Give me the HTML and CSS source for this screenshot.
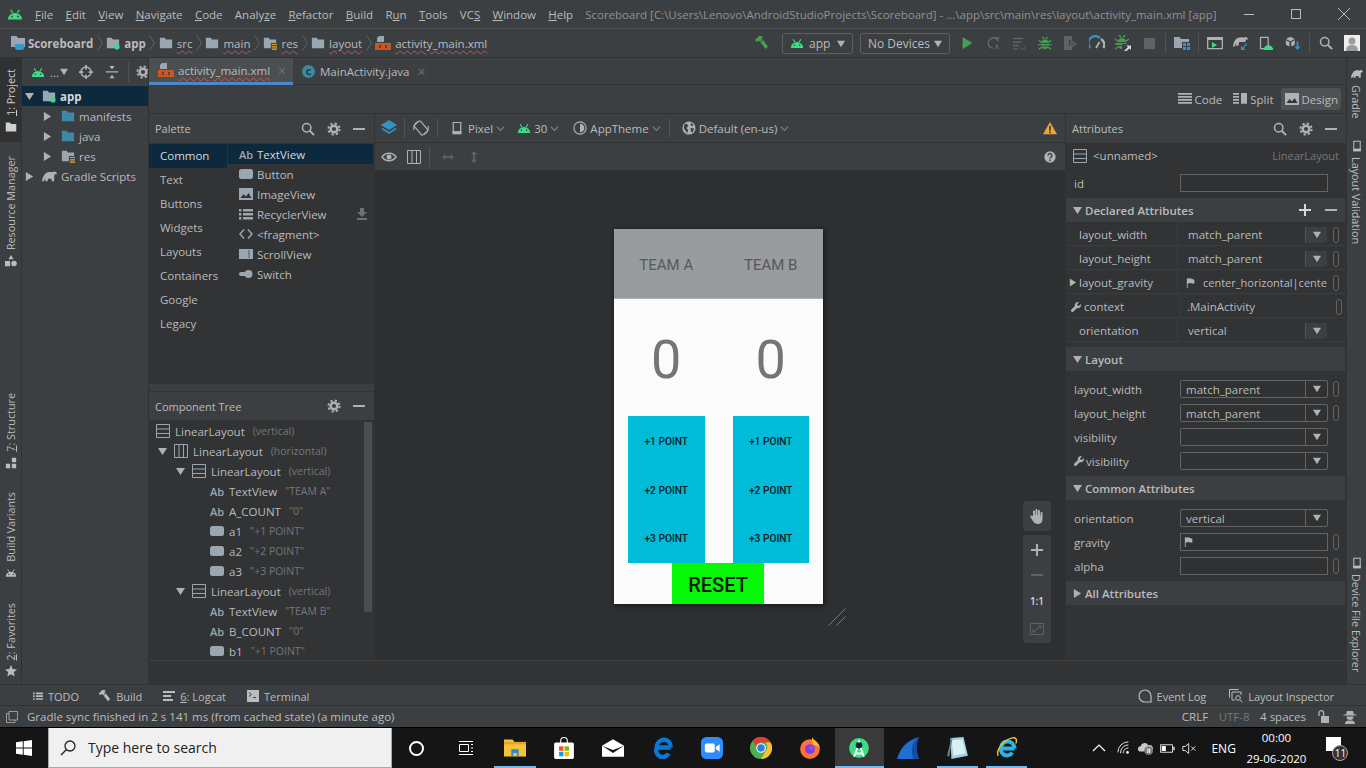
FILE: index.html
```html
<!DOCTYPE html>
<html lang="en">
<head>
  <meta charset="UTF-8" />
  <title>Scoreboard - activity_main.xml</title>
  <link rel="stylesheet" href="styles.css">
</head>
<body>
  <!-- icon sprite -->
  <svg class="sprite" xmlns="http://www.w3.org/2000/svg">
    <symbol id="i-android" viewBox="0 0 16 12"><path fill="currentColor" d="M1 11a7 6.6 0 0 1 14 0z"/><path stroke="currentColor" stroke-width="1.2" d="M3.6 1.2l2 3.2M12.4 1.2l-2 3.2"/><circle cx="5" cy="8" r=".9" fill="#3c3f41"/><circle cx="11" cy="8" r=".9" fill="#3c3f41"/></symbol>
    <symbol id="i-folder" viewBox="0 0 16 16"><path fill="currentColor" d="M1 2h5.5L8 4h7v10H1z"/></symbol>
    <symbol id="i-module" viewBox="0 0 16 16"><path fill="#9aa7b0" d="M1 2h5.5L8 4h7v10H1z"/><circle cx="12.5" cy="12.5" r="3" fill="#3ddc84"/></symbol>
    <symbol id="i-res" viewBox="0 0 16 16"><path fill="#9aa7b0" d="M1 2h5.5L8 4h7v10H1z"/><path fill="#3c3f41" d="M9 8h7v8H9z"/><path fill="#e5a93a" d="M10 9h6v1.4h-6zM10 11.6h6V13h-6zM10 14.2h6v1.4h-6z"/></symbol>
    <symbol id="i-project" viewBox="0 0 16 16"><path fill="#9aa7b0" d="M1 1h5.5L8 3h7v9H1z"/><path fill="#2d9bd6" d="M5 9h9v3.5a2.5 2.5 0 0 1-2.5 2.5h-4A2.5 2.5 0 0 1 5 12.5z"/></symbol>
    <symbol id="i-xml" viewBox="0 0 16 16"><path fill="#9aa7b0" d="M4 1h5v6H2V3z"/><path fill="#c7581f" d="M0 8h16v7H0z"/><path fill="none" stroke="#2b2d30" d="M6 10l-2 1.5L6 13M10 10l2 1.5L10 13"/></symbol>
    <symbol id="i-tri-r" viewBox="0 0 10 10"><path fill="currentColor" d="M1 0l8 5-8 5z"/></symbol>
    <symbol id="i-tri-d" viewBox="0 0 10 10"><path fill="currentColor" d="M0 1h10L5 9z"/></symbol>
    <symbol id="i-chev-d" viewBox="0 0 10 10"><path fill="none" stroke="currentColor" stroke-width="1.3" d="M1 3l4 4 4-4"/></symbol>
    <symbol id="i-chev-r" viewBox="0 0 6 16"><path fill="none" stroke="currentColor" d="M.5.5l5 7.5-5 7.5"/></symbol>
    <symbol id="i-gear" viewBox="0 0 16 16"><circle cx="8" cy="8" r="3.8" fill="none" stroke="currentColor" stroke-width="2.8"/><circle cx="8" cy="8" r="6.4" fill="none" stroke="currentColor" stroke-width="2.2" stroke-dasharray="2.6 2.43"/></symbol>
    <symbol id="i-search" viewBox="0 0 16 16"><circle cx="6.5" cy="6.5" r="4.8" fill="none" stroke="currentColor" stroke-width="1.7"/><path stroke="currentColor" stroke-width="2.2" d="M10 10l5 5"/></symbol>
    <symbol id="i-minus" viewBox="0 0 12 12"><path fill="currentColor" d="M0 5h12v2H0z"/></symbol>
    <symbol id="i-plus" viewBox="0 0 12 12"><path fill="currentColor" d="M0 5h12v2H0zM5 0h2v12H5z"/></symbol>
    <symbol id="i-target" viewBox="0 0 16 16"><circle cx="8" cy="8" r="5.8" fill="none" stroke="currentColor" stroke-width="1.6"/><path stroke="currentColor" stroke-width="2" d="M8 0v5M8 11v5M0 8h5M11 8h5"/></symbol>
    <symbol id="i-collapse" viewBox="0 0 16 16"><path fill="currentColor" d="M1 7h14v1.6H1zM5 1h6L8 5zM5 15h6l-3-4z"/></symbol>
    <symbol id="i-lin-v" viewBox="0 0 14 14"><path fill="none" stroke="currentColor" d="M.5.5h13v13H.5zM.5 5h13M.5 9.5h13"/></symbol>
    <symbol id="i-lin-h" viewBox="0 0 14 14"><path fill="none" stroke="currentColor" d="M.5.5h13v13H.5zM5 .5v13M9.5 .5v13"/></symbol>
    <symbol id="i-button" viewBox="0 0 14 14"><rect y="2" width="14" height="10" rx="2.5" fill="currentColor"/></symbol>
    <symbol id="i-image" viewBox="0 0 14 14"><path fill="currentColor" d="M0 1h14v12H0z"/><path fill="#313335" d="M1.5 11l3-4 2.5 2.5L9.500 6l3 5z"/></symbol>
    <symbol id="i-list" viewBox="0 0 14 14"><path fill="currentColor" d="M0 2h2.400v2.400H0zM4 2h10v2.400H4zM0 6h2.400v2.400H0zM4 6h10v2.400H4zM0 10h2.400v2.400H0zM4 10h10v2.400H4z"/></symbol>
    <symbol id="i-code" viewBox="0 0 14 14"><path fill="none" stroke="currentColor" stroke-width="1.500" d="M5 2.500L1 7l4 4.500M9 2.500L13 7l-4 4.500"/></symbol>
    <symbol id="i-scroll" viewBox="0 0 14 14"><path fill="currentColor" d="M0 2h14v10H0z"/><path fill="#313335" d="M9.500 3h1v8h-1z" opacity=".6"/></symbol>
    <symbol id="i-switch" viewBox="0 0 14 14"><rect y="5" width="7" height="4" rx="2" fill="currentColor"/><circle cx="9.500" cy="7" r="4" fill="currentColor"/></symbol>
    <symbol id="i-download" viewBox="0 0 12 12"><path fill="currentColor" d="M4 0h4v4h3L6 9 1 4h3zM1 10h10v2H1z"/></symbol>
    <symbol id="i-flag" viewBox="0 0 12 12"><path fill="currentColor" d="M1 0h1v12H1zM2 1l3-.6L10 2v5L5 6 2 7z"/></symbol>
    <symbol id="i-wrench" viewBox="0 0 12 12"><path fill="currentColor" d="M11.500 2.500L9 5 7 3 9.500.5a3.500 3.500 0 0 0-4.800 4.300L.5 9a1.700 1.700 0 0 0 2.500 2.500l4.200-4.200a3.500 3.500 0 0 0 4.300-4.800z"/></symbol>
    <symbol id="i-hammer" viewBox="0 0 16 16"><path fill="currentColor" d="M2 5L6 1h3l1 1.500-2 .5 1.500 1.500L7 7 5.500 5.500 4 7zM7.500 7.500L10 5l5 6.500-2.500 2.500z"/></symbol>
    <symbol id="i-elephant" viewBox="0 0 16 12"><path fill="currentColor" d="M3 3.500C4.500 1 9 .8 11 1.500l2-.8c1.400 0 2.400.8 2.800 2L15 4.200c-.7-.3-1-.8-1.500-.8L13 6v5h-2.500l-.5-2.500H6.500L6 11H3.500V7.500L2 11H0c.2-3 1.200-5.500 3-7.500z"/></symbol>
    <symbol id="i-bug" viewBox="0 0 16 16"><ellipse cx="8" cy="9.500" rx="5" ry="5.500" fill="currentColor"/><path stroke="currentColor" stroke-width="1.400" d="M1 5l3 2M15 5l-3 2M0 10h3M13 10h3M1 15l3-2M15 15l-3-2M5 1l2 2.500M11 1L9 3.500"/><path stroke="#3c3f41" d="M3 8.500h10M3 11.500h10"/></symbol>
    <symbol id="i-layers" viewBox="0 0 16 16"><path fill="#3592c4" d="M8 0l8 5-8 5-8-5z"/><path fill="none" stroke="#3592c4" stroke-width="1.500" d="M1 8.500l7 4.500 7-4.500"/></symbol>
    <symbol id="i-rotate" viewBox="0 0 16 16"><g fill="none" stroke="currentColor" stroke-width="1.200"><rect x="4" y="1.500" width="8" height="13" rx="1" transform="rotate(-40 8 8)"/><path d="M1 10A7.500 7.500 0 0 1 5 1.500M15 6a7.500 7.500 0 0 1-4 8.500"/></g></symbol>
    <symbol id="i-device" viewBox="0 0 12 16"><path fill="none" stroke="currentColor" stroke-width="1.400" d="M1.700 1.700h8.600v12.600H1.700z"/><path fill="currentColor" d="M1 11.500h10v3.500H1z"/></symbol>
    <symbol id="i-theme" viewBox="0 0 16 16"><circle cx="8" cy="8" r="7" fill="none" stroke="currentColor" stroke-width="1.300"/><path fill="currentColor" d="M8 3a5 5 0 0 1 0 10z"/></symbol>
    <symbol id="i-globe" viewBox="0 0 16 16"><circle cx="8" cy="8" r="7.500" fill="currentColor"/><path fill="#3c3f41" d="M3 3l3 .5L7 6 5 8l2 2-1 4-2-3-2-3zM10 2l3 2-1 2-2-1zM10 8l4 .5-2 4.500-2-1z"/></symbol>
    <symbol id="i-warn" viewBox="0 0 16 16"><path fill="#f2a42c" d="M8 1l8 14H0z"/><path fill="#3c3f41" d="M7 5.500h2V11H7zM7 12h2v2H7z"/></symbol>
    <symbol id="i-help" viewBox="0 0 16 16"><circle cx="8" cy="8" r="6.500" fill="#afb1b3"/><path fill="none" stroke="#3c3f41" stroke-width="1.600" d="M5.800 6.300a2.200 2.200 0 1 1 3.400 1.800c-.8.500-1.200.9-1.200 1.700"/><path fill="#3c3f41" d="M7.100 10.800h1.800v1.700H7.100z"/></symbol>
    <symbol id="i-eye" viewBox="0 0 16 16"><path fill="none" stroke="currentColor" stroke-width="1.400" d="M1 8c3.500-5 10.500-5 14 0-3.500 5-10.500 5-14 0z"/><circle cx="8" cy="8" r="2.500" fill="currentColor"/></symbol>
    <symbol id="i-arrow-h" viewBox="0 0 16 16"><path fill="currentColor" d="M1 8l4-3.500v2.500h6V4.500L15 8l-4 3.500V9H5v2.500z"/></symbol>
    <symbol id="i-arrow-v" viewBox="0 0 16 16"><path fill="currentColor" d="M8 1l3.500 4H9v6h2.500L8 15l-3.500-4H7V5H4.500z"/></symbol>
    <symbol id="i-code-view" viewBox="0 0 14 14"><path fill="currentColor" d="M0 1h14v1.800H0zM0 4h14v1.800H0zM0 7h14v1.800H0zM0 10h14v1.800H0z"/></symbol>
    <symbol id="i-split-view" viewBox="0 0 14 14"><path fill="currentColor" d="M0 1h6v1.800H0zM0 4h6v1.800H0zM0 7h6v1.800H0zM0 10h6v1.800H0zM8 1h6v10.800H8z"/></symbol>
    <symbol id="i-res-mgr" viewBox="0 0 14 14"><path fill="currentColor" d="M7 0l3 5H4zM0 7h6v6H0z"/><circle cx="10.500" cy="10" r="3.200" fill="currentColor"/></symbol>
    <symbol id="i-structure" viewBox="0 0 14 14"><path fill="currentColor" d="M8 1h5v5H8zM1 8h5v5H1zM8 8h5v5H8z"/></symbol>
    <symbol id="i-star" viewBox="0 0 14 14"><path fill="currentColor" d="M7 0l2 4.800 5 .4-3.800 3.300 1.200 5L7 10.900l-4.400 2.600 1.200-5L0 5.200l5-.4z"/></symbol>
    <symbol id="i-term" viewBox="0 0 12 12"><path fill="currentColor" d="M0 0h12v12H0z"/><path fill="none" stroke="#3c3f41" d="M2 2.500l2.500 2L2 6.500M6 7.500h3"/></symbol>
    <symbol id="i-logcat" viewBox="0 0 12 12"><path fill="currentColor" d="M0 1h12v2H0zM0 5h8v2H0zM0 9h10v2H0z"/></symbol>
    <symbol id="i-event" viewBox="0 0 14 14"><path fill="none" stroke="currentColor" stroke-width="1.200" d="M7 1a6 6 0 1 0 0 12h6V7a6 6 0 0 0-6-6z"/></symbol>
    <symbol id="i-inspect" viewBox="0 0 14 14"><path fill="none" stroke="currentColor" d="M.5.500h9M.5.500v8M3 3h9v3M3 3v8h3"/><circle cx="9" cy="9" r="2.300" fill="none" stroke="currentColor"/><path stroke="currentColor" d="M11 11l2.500 2.500"/></symbol>
    <symbol id="i-status" viewBox="0 0 14 14"><path fill="none" stroke="currentColor" d="M3.500.500h10v10h-10zM3.500 3H.5v10.500h10v-3"/></symbol>
    <symbol id="i-lock" viewBox="0 0 14 14"><path fill="none" stroke="currentColor" stroke-width="1.300" d="M2 6V3a2.300 2.300 0 0 1 4.600 0v3"/><path fill="currentColor" d="M4 6h8v7H4z"/></symbol>
    <symbol id="i-hector" viewBox="0 0 14 14"><path fill="currentColor" d="M4 1h6l1 3.500h2.500v1H.5v-1H3zM3.500 6.500h7a3.500 3.500 0 0 1-7 0zM2 14c0-3 2-3.500 5-3.500s5 .5 5 3.500z"/></symbol>
    <symbol id="i-win" viewBox="0 0 16 16"><path fill="#fff" d="M0 2.300l6.800-1v6.200H0zM7.700 1.200L16 0v7.500H7.700zM0 8.500h6.800v6.200l-6.800-1zM7.700 8.500H16V16l-8.300-1.200z"/></symbol>
    <symbol id="i-taskview" viewBox="0 0 16 16"><path fill="none" stroke="#fff" d="M1.500 4.500h9v7h-9zM13 4.500h2M13 8h2M13 11.500h2M1 1.500h14M1 14.500h14"/></symbol>
    <symbol id="i-explorer" viewBox="0 0 18 16"><path fill="#f5c33b" d="M0 1h7l1.500 2H18v12H0z"/><path fill="#e6a526" d="M0 3h18v2H0z"/><path fill="#2f86c9" d="M6 9h6v6h-1.500v-3h-3v3H6z"/></symbol>
    <symbol id="i-store" viewBox="0 0 18 20"><path fill="none" stroke="#fff" d="M6 6V3.500a3 3 0 0 1 6 0V6"/><rect y="5" width="18" height="15" rx="1.500" fill="#fff"/><path fill="#f25022" d="M4.500 8.500h4v4h-4z"/><path fill="#7fba00" d="M9.500 8.500h4v4h-4z"/><path fill="#00a4ef" d="M4.500 13.500h4v4h-4z"/><path fill="#ffb900" d="M9.500 13.500h4v4h-4z"/></symbol>
    <symbol id="i-mail" viewBox="0 0 20 16"><path fill="#fff" d="M0 6l10-6 10 6v10H0z"/><path fill="#1a1a1a" d="M0 6l10 6.500L20 6l-10 3.800z"/></symbol>
    <symbol id="i-edge" viewBox="0 0 20 20"><path fill="none" stroke="#0a78d7" stroke-width="4" d="M17 9.500H4.500a5.800 5.800 0 0 0 10.500 5.500M4 9.500C4.500 5 7.500 2.500 11 2.500c3.500 0 6 2.500 6 7"/></symbol>
    <symbol id="i-zoom" viewBox="0 0 20 20"><rect width="20" height="20" rx="5" fill="#2d8cff"/><rect x="3.500" y="6" width="9" height="8" rx="1.500" fill="#fff"/><path fill="#fff" d="M13.500 9l3.500-2.500v7L13.500 11z"/></symbol>
    <symbol id="i-chrome" viewBox="0 0 20 20"><circle cx="10" cy="10" r="10" fill="#4caf50"/><path fill="#e53935" d="M10 0a10 10 0 0 1 8.700 5H10a5 5 0 0 0-4.700 3.300L2.400 3.500A10 10 0 0 1 10 0z"/><path fill="#fbc02d" d="M18.700 5A10 10 0 0 1 10 20l4.300-7.500A5 5 0 0 0 14 5z"/><circle cx="10" cy="10" r="4.400" fill="#fff"/><circle cx="10" cy="10" r="3.400" fill="#2f7fe0"/></symbol>
    <symbol id="i-firefox" viewBox="0 0 20 20"><circle cx="10" cy="11" r="9" fill="#ff7139"/><path fill="#ffbd2e" d="M12 0c1 3 6 4.500 7 10-2-2-4-3-6-3-1-2-1.500-4-1-7z"/><circle cx="10" cy="11" r="4.500" fill="#7542e5"/><circle cx="11" cy="10" r="2" fill="#b045c9"/></symbol>
    <symbol id="i-studio" viewBox="0 0 20 20"><circle cx="10" cy="10" r="9" fill="#3ddc84"/><circle cx="10" cy="7.500" r="3" fill="#123"/><path fill="none" stroke="#fff" stroke-width="1.600" d="M10 3v2M8.500 10L5.500 18M11.500 10l3 8M6.500 15h7"/></symbol>
    <symbol id="i-fin" viewBox="0 0 20 20"><path fill="#1d6fd0" d="M0 20C3 10 9 3 20 0c-3 6-3 13 0 20z"/><path fill="#0f4ea3" d="M15 5c-2 5-2 10 0 15h5c-3-7-3-14 0-20z"/></symbol>
    <symbol id="i-note" viewBox="0 0 20 20"><path fill="#9fd0dc" d="M3 1l12-1 4 17-15 3z"/><path fill="#d8f0f5" d="M4 3l10-1 3 13-11 2z"/><path fill="#6a7f8a" d="M0 17l4-16 1 0-3 17z"/></symbol>
    <symbol id="i-ie" viewBox="0 0 20 20"><path fill="none" stroke="#2ab5ea" stroke-width="3.600" d="M17 10.500H4.500a5.500 5.500 0 0 0 10.200 3.500M4.500 10C5 6 7.500 4 10.500 4s6 2.500 6.500 6.500"/><path fill="none" stroke="#f3c318" stroke-width="1.300" d="M2 17C-.5 12 7 3 14 1c4-1 5.500 1 4 5"/></symbol>
    <symbol id="i-play" viewBox="0 0 16 16"><path fill="currentColor" d="M3 1l11 7-11 7z"/></symbol>
    <symbol id="i-rerun" viewBox="0 0 16 16"><path fill="none" stroke="currentColor" stroke-width="2" d="M13 4A6 6 0 1 0 8 14"/><path fill="currentColor" d="M9 1l6 0-1 6zM10 15l2-6h1l2 6h-1.500l-1-3-1 3z"/></symbol>
    <symbol id="i-apply" viewBox="0 0 16 16"><path fill="currentColor" d="M1 2h12v1.800H1zM1 6h10v1.800H1zM1 10h7v1.800H1zM1 14h6v1.500H1z"/><path fill="none" stroke="currentColor" d="M10 13a2.500 2.500 0 1 0 3-2.500"/></symbol>
    <symbol id="i-attach" viewBox="0 0 16 16"><path fill="currentColor" d="M1 1h8v14H1z"/><path fill="#3c3f41" d="M6 5h5v6H6z"/><path fill="currentColor" d="M7 4l8 5-8 5z" opacity=".7"/></symbol>
    <symbol id="i-gauge" viewBox="0 0 16 16"><path fill="none" stroke="#3592c4" stroke-width="2.400" d="M1.500 13A6.800 6.800 0 0 1 11 3"/><path fill="none" stroke="#afb1b3" stroke-width="2.400" d="M12 4a6.800 6.800 0 0 1 2.500 9"/><path stroke="#afb1b3" stroke-width="1.800" d="M7 13l3.500-6"/></symbol>
    <symbol id="i-bug-attach" viewBox="0 0 16 16"><ellipse cx="7" cy="8.500" rx="4.500" ry="5.500" fill="#499c54"/><path stroke="#499c54" stroke-width="1.400" d="M0 4l3 2M14 4l-3 2M0 9h3M0 14l3-2M4 0l2 2.500M10 0L8 2.500"/><path stroke="#3c3f41" d="M3 7.500h8M3 10.500h8"/><path fill="#3c3f41" d="M7 9h9v7H7z"/><path fill="#d5d7d9" d="M9 16l4-4-2-1.500h5V15l-1.500-1.500-3 2.500z"/></symbol>
    <symbol id="i-struct" viewBox="0 0 16 16"><path fill="#9aa7b0" d="M0 2h5.500L7 4h8v9H0z"/><path fill="#3c3f41" d="M8 7h8v9H8z"/><path fill="#3592c4" d="M9 8h3v3H9zM13 8h3v3h-3zM9 12h3v3H9zM13 12h3v3h-3z"/></symbol>
    <symbol id="i-avd" viewBox="0 0 16 16"><path fill="none" stroke="#afb1b3" stroke-width="1.300" d="M.7 2.700h14.600v11H.7z"/><path fill="#afb1b3" d="M1 3h14v2H1z"/><path fill="#3ddc84" d="M5 7l5 3-5 3z"/></symbol>
    <symbol id="i-gsync" viewBox="0 0 18 16"><path fill="#afb1b3" d="M3 4C5 1.500 10 1 12 2l2-.8c1.400 0 2.400.8 2.800 2l-.8 1.500c-.7-.3-1-.8-1.500-.8L14 7H7l-1 4H3.500V8L2 12H0c.2-3 1.200-6 3-8z"/><path fill="#3592c4" d="M15 8l-4 5-2-2v5h5l-2-2 4-5z"/></symbol>
    <symbol id="i-devmon" viewBox="0 0 18 16"><path fill="none" stroke="#afb1b3" stroke-width="1.400" d="M1.700 1.700h8.600v12.600H1.700z"/><path fill="#3ddc84" d="M5 16a5.500 5.500 0 0 1 11 0z"/></symbol>
    <symbol id="i-sdk" viewBox="0 0 18 16"><path fill="#afb1b3" d="M6 1l5 2.500L6 6 1 3.500zM1 5l4 2v5L1 10zM7 7l4-2v5l-4 2z"/><path fill="#3592c4" d="M13 6h2v6h2.500L14 16l-3.500-4H13z"/></symbol>
    <symbol id="i-user" viewBox="0 0 16 16"><path fill="#eee" d="M0 0h16v16H0z"/><circle cx="8" cy="6" r="3.500" fill="#9a9a9a"/><path fill="#9a9a9a" d="M2 16c0-5 3-6 6-6s6 1 6 6z"/></symbol>
    <symbol id="i-hand" viewBox="0 0 16 16"><path fill="currentColor" d="M4 8V3.500a1 1 0 0 1 2 0V7h.5V2a1 1 0 0 1 2 0v5H9V3a1 1 0 0 1 2 0v5h.5V5a1 1 0 0 1 2 0v6c0 3-2 5-4.500 5S5 15 3.500 12.500L1.500 9c-.7-1.300 1-2 1.800-1z"/></symbol>
    <symbol id="i-fit" viewBox="0 0 16 16"><path fill="none" stroke="currentColor" d="M1.500 2.500h13v11h-13z"/><path fill="none" stroke="currentColor" d="M4 11l8-6M9 5h3v3M4 8v3h3"/></symbol>
    <symbol id="i-wifi" viewBox="0 0 16 16"><path fill="none" stroke="#fff" d="M1 13A12 12 0 0 1 13 1M4 14a9 9 0 0 1 9-9.500M7 14a6 6 0 0 1 6-6"/><circle cx="12" cy="13" r="1.500" fill="#fff"/></symbol>
    <symbol id="i-cloud" viewBox="0 0 18 16"><path fill="#c8c8c8" d="M3 12a3 3 0 0 1 0-6 4.500 4.500 0 0 1 8.500-1 3.500 3.500 0 0 1 3 7z"/><circle cx="12" cy="11" r="5" fill="#7a7a7a"/><path fill="#fff" d="M10.500 8.500h1.200v5h-1.200zM12.500 8.500h1.200v5h-1.200z"/></symbol>
    <symbol id="i-battery" viewBox="0 0 18 12"><path fill="none" stroke="#fff" d="M.5 1.500h14.500v9H.5z"/><path fill="#fff" d="M2 3h5v6H2zM16 4h1.500v4H16z"/></symbol>
    <symbol id="i-mute" viewBox="0 0 18 16"><path fill="none" stroke="#fff" d="M1 5.500h3L8 2v12l-4-3.500H1zM11 5.500l5 5M16 5.500l-5 5"/></symbol>
    <symbol id="i-caret" viewBox="0 0 14 10"><path fill="none" stroke="#fff" stroke-width="1.200" d="M1 8l6-6 6 6"/></symbol>
  </svg>

  <!-- Menu -->
  <div class="menubar">
    <svg class="ic logo"><use href="#i-android"/></svg>
    <div class="menu">
      <span><u>F</u>ile</span><span><u>E</u>dit</span><span><u>V</u>iew</span><span><u>N</u>avigate</span><span><u>C</u>ode</span><span>Analy<u>z</u>e</span><span><u>R</u>efactor</span><span><u>B</u>uild</span><span>R<u>u</u>n</span><span><u>T</u>ools</span><span>VC<u>S</u></span><span><u>W</u>indow</span><span><u>H</u>elp</span>
    </div>
    <div class="win-title">Scoreboard [C:\Users\Lenovo\AndroidStudioProjects\Scoreboard] - ...\app\src\main\res\layout\activity_main.xml [app]</div>
    <div class="win-controls">
      <i class="win-min"></i>
      <i class="win-max"></i>
      <i class="win-close"></i>
    </div>
  </div>

  <!-- Breadcrumbs + run toolbar -->
  <div class="navbar">
    <div class="crumbs">
      <svg class="ic s16"><use href="#i-project"/></svg><b>Scoreboard</b><svg class="crumb-sep"><use href="#i-chev-r"/></svg>
      <svg class="ic s14"><use href="#i-module"/></svg><b>app</b><svg class="crumb-sep"><use href="#i-chev-r"/></svg>
      <svg class="ic s14 grey-blue"><use href="#i-folder"/></svg><span class="typo">src</span><svg class="crumb-sep"><use href="#i-chev-r"/></svg>
      <svg class="ic s14 grey-blue"><use href="#i-folder"/></svg><span class="typo">main</span><svg class="crumb-sep"><use href="#i-chev-r"/></svg>
      <svg class="ic s14"><use href="#i-res"/></svg><span class="typo">res</span><svg class="crumb-sep"><use href="#i-chev-r"/></svg>
      <svg class="ic s14 grey-blue"><use href="#i-folder"/></svg><span class="typo">layout</span><svg class="crumb-sep"><use href="#i-chev-r"/></svg>
      <svg class="ic s16"><use href="#i-xml"/></svg><span class="typo">activity_main.xml</span>
    </div>
    <div class="run-tools">
      <div class="tb-btn green-dark"><svg class="ic s16"><use href="#i-hammer"/></svg></div>
      <div class="combo combo-app"><svg class="ic droid"><use href="#i-android"/></svg><span>app</span><svg class="ic combo-arrow"><use href="#i-tri-d"/></svg></div>
      <div class="combo combo-dev"><span>No Devices</span><svg class="ic combo-arrow"><use href="#i-tri-d"/></svg></div>
      <div class="tb-btn play-btn green-dark"><svg class="ic s14"><use href="#i-play"/></svg></div>
      <div class="tb-btn dim"><svg class="ic s14"><use href="#i-rerun"/></svg></div>
      <div class="tb-btn dim"><svg class="ic s14"><use href="#i-apply"/></svg></div>
      <div class="tb-btn green-dark"><svg class="ic s14"><use href="#i-bug"/></svg></div>
      <div class="tb-btn dim"><svg class="ic s16"><use href="#i-attach"/></svg></div>
      <div class="tb-btn"><svg class="ic s16"><use href="#i-gauge"/></svg></div>
      <div class="tb-btn"><svg class="ic s16"><use href="#i-bug-attach"/></svg></div>
      <div class="tb-btn dim"><div class="stop"></div></div>
      <i class="tb-sep"></i>
      <div class="tb-btn"><svg class="ic s16"><use href="#i-struct"/></svg></div>
      <i class="tb-sep"></i>
      <div class="tb-btn"><svg class="ic s16"><use href="#i-avd"/></svg></div>
      <div class="tb-btn"><svg class="ic s16"><use href="#i-gsync"/></svg></div>
      <div class="tb-btn"><svg class="ic s16"><use href="#i-devmon"/></svg></div>
      <div class="tb-btn"><svg class="ic s16"><use href="#i-sdk"/></svg></div>
      <i class="tb-sep"></i>
      <div class="tb-btn grey"><svg class="ic s14"><use href="#i-search"/></svg></div>
      <div class="tb-btn"><svg class="ic s16"><use href="#i-user"/></svg></div>
    </div>
  </div>

  <!-- Main area -->
  <div class="workbench">
    <div class="stripe stripe-left">
      <div class="stripe-item active st-project"><span class="v-text"><u>1</u>: Project</span><svg class="ic s12"><use href="#i-folder"/></svg></div>
      <div class="stripe-item st-res"><span class="v-text">Resource Manager</span><svg class="ic s12"><use href="#i-res-mgr"/></svg></div>
      <div class="stripe-item st-struct"><span class="v-text"><u>7</u>: Structure</span><svg class="ic s12"><use href="#i-structure"/></svg></div>
      <div class="stripe-item st-build"><span class="v-text">Build Variants</span><svg class="ic s12"><use href="#i-android"/></svg></div>
      <div class="stripe-item st-fav"><span class="v-text"><u>2</u>: Favorites</span><svg class="ic s12"><use href="#i-star"/></svg></div>
    </div>

    <div class="project">
      <div class="project-head">
        <svg class="ic droid"><use href="#i-android"/></svg>
        <span class="dots">...</span>
        <svg class="ic tiny grey"><use href="#i-tri-d"/></svg>
        <svg class="ic s14 grey target"><use href="#i-target"/></svg>
        <svg class="ic s14 grey collapse"><use href="#i-collapse"/></svg>
        <i class="head-sep"></i>
        <svg class="ic s14 grey cog"><use href="#i-gear"/></svg>
      </div>
      <div class="p-row selected p0"><svg class="ic arrow"><use href="#i-tri-d"/></svg><svg class="ic s14"><use href="#i-module"/></svg><b>app</b></div>
      <div class="p-row p1"><svg class="ic arrow"><use href="#i-tri-r"/></svg><svg class="ic s14 teal"><use href="#i-folder"/></svg><span>manifests</span></div>
      <div class="p-row p1"><svg class="ic arrow"><use href="#i-tri-r"/></svg><svg class="ic s14 teal"><use href="#i-folder"/></svg><span>java</span></div>
      <div class="p-row p1"><svg class="ic arrow"><use href="#i-tri-r"/></svg><svg class="ic s14"><use href="#i-res"/></svg><span>res</span></div>
      <div class="p-row p0"><svg class="ic arrow"><use href="#i-tri-r"/></svg><svg class="ic s15 grey"><use href="#i-elephant"/></svg><span>Gradle Scripts</span></div>
    </div>

    <div class="editor">
      <div class="tabs">
        <div class="tab active"><svg class="ic s16"><use href="#i-xml"/></svg><span class="typo">activity_main.xml</span><em>×</em></div>
        <div class="tab"><span class="class-badge">C</span><span>MainActivity.java</span><em>×</em></div>
      </div>
      <div class="view-switch">
        <div class="view-btn"><svg class="ic s14 grey"><use href="#i-code-view"/></svg>Code</div>
        <div class="view-btn"><svg class="ic s14 grey"><use href="#i-split-view"/></svg>Split</div>
        <div class="view-btn on"><svg class="ic s14 grey"><use href="#i-image"/></svg>Design</div>
      </div>

      <div class="workspace">
        <!-- Palette + tree -->
        <div class="left-col">
          <div class="panel-head">
            <span>Palette</span>
            <div class="head-icons">
              <svg class="ic s14 grey"><use href="#i-search"/></svg>
              <svg class="ic s14 grey"><use href="#i-gear"/></svg>
              <svg class="ic s12 grey"><use href="#i-minus"/></svg>
            </div>
          </div>
          <div class="palette">
            <div class="cats">
              <div class="cat selected">Common</div>
              <div class="cat">Text</div>
              <div class="cat">Buttons</div>
              <div class="cat">Widgets</div>
              <div class="cat">Layouts</div>
              <div class="cat">Containers</div>
              <div class="cat">Google</div>
              <div class="cat">Legacy</div>
            </div>
            <div class="widgets">
              <div class="widget selected"><span class="ab">Ab</span>TextView</div>
              <div class="widget"><svg class="ic s14 slate"><use href="#i-button"/></svg>Button</div>
              <div class="widget"><svg class="ic s14 slate"><use href="#i-image"/></svg>ImageView</div>
              <div class="widget"><svg class="ic s14 slate"><use href="#i-list"/></svg>RecyclerView<svg class="ic s12 dl"><use href="#i-download"/></svg></div>
              <div class="widget"><svg class="ic s14 slate"><use href="#i-code"/></svg>&lt;fragment&gt;</div>
              <div class="widget"><svg class="ic s14 slate"><use href="#i-scroll"/></svg>ScrollView</div>
              <div class="widget"><svg class="ic s14 slate"><use href="#i-switch"/></svg>Switch</div>
            </div>
          </div>
          <div class="panel-gap"></div>
          <div class="panel-head tree-head">
            <span>Component Tree</span>
            <div class="head-icons">
              <svg class="ic s14 grey"><use href="#i-gear"/></svg>
              <svg class="ic s12 grey"><use href="#i-minus"/></svg>
            </div>
          </div>
          <div class="tree">
            <div class="tree-scroll"></div>
            <div class="t-row lv0"><svg class="ic s14 slate"><use href="#i-lin-v"/></svg><span>LinearLayout</span><small>(vertical)</small></div>
            <div class="t-row lv1"><svg class="ic arrow"><use href="#i-tri-d"/></svg><svg class="ic s14 slate"><use href="#i-lin-h"/></svg><span>LinearLayout</span><small>(horizontal)</small></div>
            <div class="t-row lv2"><svg class="ic arrow"><use href="#i-tri-d"/></svg><svg class="ic s14 slate"><use href="#i-lin-v"/></svg><span>LinearLayout</span><small>(vertical)</small></div>
            <div class="t-row leaf"><span class="ab">Ab</span><span>TextView</span><small>"TEAM A"</small></div>
            <div class="t-row leaf"><span class="ab">Ab</span><span>A_COUNT</span><small>"0"</small></div>
            <div class="t-row leaf"><svg class="ic s14 slate"><use href="#i-button"/></svg><span>a1</span><small>"+1 POINT"</small></div>
            <div class="t-row leaf"><svg class="ic s14 slate"><use href="#i-button"/></svg><span>a2</span><small>"+2 POINT"</small></div>
            <div class="t-row leaf"><svg class="ic s14 slate"><use href="#i-button"/></svg><span>a3</span><small>"+3 POINT"</small></div>
            <div class="t-row lv2"><svg class="ic arrow"><use href="#i-tri-d"/></svg><svg class="ic s14 slate"><use href="#i-lin-v"/></svg><span>LinearLayout</span><small>(vertical)</small></div>
            <div class="t-row leaf"><span class="ab">Ab</span><span>TextView</span><small>"TEAM B"</small></div>
            <div class="t-row leaf"><span class="ab">Ab</span><span>B_COUNT</span><small>"0"</small></div>
            <div class="t-row leaf"><svg class="ic s14 slate"><use href="#i-button"/></svg><span>b1</span><small>"+1 POINT"</small></div>
          </div>
        </div>

        <!-- Design surface -->
        <div class="design">
          <div class="design-bar bar-one">
            <svg class="ic s16 mr-layers"><use href="#i-layers"/></svg><i class="bar-sep"></i>
            <svg class="ic s16 grey mr-rotate"><use href="#i-rotate"/></svg><i class="bar-sep"></i>
            <svg class="ic s14 grey mr-device"><use href="#i-device"/></svg><span>Pixel</span><svg class="ic chev"><use href="#i-chev-d"/></svg>
            <svg class="ic droid mr-api"><use href="#i-android"/></svg><span>30</span><svg class="ic chev"><use href="#i-chev-d"/></svg>
            <svg class="ic s14 grey mr-theme"><use href="#i-theme"/></svg><span>AppTheme</span><svg class="ic chev"><use href="#i-chev-d"/></svg>
            <i class="bar-sep mr-locale"></i>
            <svg class="ic s14 grey mr-globe"><use href="#i-globe"/></svg><span>Default (en-us)</span><svg class="ic chev"><use href="#i-chev-d"/></svg>
            <svg class="ic s14 bar-end"><use href="#i-warn"/></svg>
          </div>
          <div class="design-bar bar-two">
            <svg class="ic s16 grey mr-layers"><use href="#i-eye"/></svg>
            <svg class="ic s14 grey mr-cols"><use href="#i-lin-h"/></svg><i class="bar-sep"></i>
            <svg class="ic s14 dim mr-arrow"><use href="#i-arrow-h"/></svg>
            <svg class="ic s14 dim mr-arrow2"><use href="#i-arrow-v"/></svg>
            <svg class="ic s14 bar-end"><use href="#i-help"/></svg>
          </div>
          <div class="canvas">
            <div class="phone">
              <div class="ph-header"><div>TEAM A</div><div>TEAM B</div></div>
              <div class="ph-scores"><div>0</div><div>0</div></div>
              <div class="ph-buttons">
                <div class="ph-col"><div>+1 POINT</div><div>+2 POINT</div><div>+3 POINT</div></div>
                <div class="ph-col"><div>+1 POINT</div><div>+2 POINT</div><div>+3 POINT</div></div>
              </div>
              <div class="ph-reset">RESET</div>
            </div>
            <svg class="grip" viewBox="0 0 18 18"><path fill="none" stroke="#8d8d8d" stroke-width=".8" d="M.5 17.500L17.500.5M8.500 17.500l9-9"/></svg>
            <div class="zoom-box hand-box"><svg class="ic s16 grey"><use href="#i-hand"/></svg></div>
            <div class="zoom-box zoom-stack">
              <svg class="ic s12 grey"><use href="#i-plus"/></svg>
              <svg class="ic s12 dim"><use href="#i-minus"/></svg>
              <span>1:1</span>
              <svg class="ic s16 dim"><use href="#i-fit"/></svg>
            </div>
          </div>
        </div>

        <!-- Attributes -->
        <div class="attrs">
          <div class="panel-head">
            <span>Attributes</span>
            <div class="head-icons">
              <svg class="ic s14 grey"><use href="#i-search"/></svg>
              <svg class="ic s14 grey"><use href="#i-gear"/></svg>
              <svg class="ic s12 grey"><use href="#i-minus"/></svg>
            </div>
          </div>
          <div class="unnamed"><svg class="ic s14 slate"><use href="#i-lin-v"/></svg><span>&lt;unnamed&gt;</span><small>LinearLayout</small></div>
          <div class="a-row id-row"><label>id</label><div class="field"></div></div>

          <div class="a-section sec-declared"><svg class="ic arrow"><use href="#i-tri-d"/></svg><b>Declared Attributes</b><div class="sec-icons"><svg class="ic s12 light"><use href="#i-plus"/></svg><svg class="ic s12 grey"><use href="#i-minus"/></svg></div></div>
          <div class="d-row"><label>layout_width</label><div class="d-val">match_parent<i class="d-drop"><svg class="ic tiny grey"><use href="#i-tri-d"/></svg></i></div><i class="pill"></i></div>
          <div class="d-row"><label>layout_height</label><div class="d-val">match_parent<i class="d-drop"><svg class="ic tiny grey"><use href="#i-tri-d"/></svg></i></div><i class="pill"></i></div>
          <div class="d-row"><svg class="ic d-arrow"><use href="#i-tri-r"/></svg><label>layout_gravity</label><div class="d-val flagged"><svg class="ic s10 grey"><use href="#i-flag"/></svg><span>center_horizontal|cente</span></div><i class="pill"></i></div>
          <div class="d-row tool-row"><svg class="ic s10 grey"><use href="#i-wrench"/></svg><label>context</label><div class="d-val no-pad">.MainActivity</div><i class="pill"></i></div>
          <div class="d-row"><label>orientation</label><div class="d-val">vertical<i class="d-drop"><svg class="ic tiny grey"><use href="#i-tri-d"/></svg></i></div></div>

          <div class="a-section sec-layout"><svg class="ic arrow"><use href="#i-tri-d"/></svg><b>Layout</b></div>
          <div class="a-row first"><label>layout_width</label><div class="field combo-field">match_parent<i class="f-drop"><svg class="ic tiny grey"><use href="#i-tri-d"/></svg></i></div><i class="pill"></i></div>
          <div class="a-row"><label>layout_height</label><div class="field combo-field">match_parent<i class="f-drop"><svg class="ic tiny grey"><use href="#i-tri-d"/></svg></i></div><i class="pill"></i></div>
          <div class="a-row"><label>visibility</label><div class="field combo-field"><i class="f-drop"><svg class="ic tiny grey"><use href="#i-tri-d"/></svg></i></div></div>
          <div class="a-row"><label class="tool"><svg class="ic s10 grey"><use href="#i-wrench"/></svg>visibility</label><div class="field combo-field"><i class="f-drop"><svg class="ic tiny grey"><use href="#i-tri-d"/></svg></i></div></div>

          <div class="a-section sec-common"><svg class="ic arrow"><use href="#i-tri-d"/></svg><b>Common Attributes</b></div>
          <div class="a-row first"><label>orientation</label><div class="field combo-field">vertical<i class="f-drop"><svg class="ic tiny grey"><use href="#i-tri-d"/></svg></i></div></div>
          <div class="a-row"><label>gravity</label><div class="field flag-field"><svg class="ic s10 grey"><use href="#i-flag"/></svg></div><i class="pill"></i></div>
          <div class="a-row"><label>alpha</label><div class="field flag-field"></div><i class="pill"></i></div>

          <div class="a-section sec-all"><svg class="ic arrow"><use href="#i-tri-r"/></svg><b>All Attributes</b></div>
        </div>
      </div>
      <div class="editor-foot"></div>
    </div>

    <div class="stripe stripe-right">
      <div class="stripe-item st-gradle"><svg class="ic s12"><use href="#i-elephant"/></svg><span class="v-text">Gradle</span></div>
      <div class="stripe-item st-valid"><svg class="ic s12"><use href="#i-device"/></svg><span class="v-text">Layout Validation</span></div>
      <div class="stripe-item st-dfe"><svg class="ic s12"><use href="#i-device"/></svg><span class="v-text">Device File Explorer</span></div>
    </div>
  </div>

  <!-- Tool window bar -->
  <div class="toolbar-bottom">
    <div class="tw tw-todo"><svg class="ic s10"><use href="#i-list"/></svg>TODO</div>
    <div class="tw tw-build"><svg class="ic s14"><use href="#i-hammer"/></svg>Build</div>
    <div class="tw tw-logcat"><svg class="ic s12"><use href="#i-logcat"/></svg><span><u>6</u>: Logcat</span></div>
    <div class="tw tw-term"><svg class="ic s12"><use href="#i-term"/></svg>Terminal</div>
    <div class="tw tw-event"><svg class="ic s14"><use href="#i-event"/></svg>Event Log</div>
    <div class="tw tw-inspect"><svg class="ic s14"><use href="#i-inspect"/></svg>Layout Inspector</div>
  </div>

  <!-- Status bar -->
  <div class="statusbar">
    <svg class="ic s12 st-icon"><use href="#i-status"/></svg>
    <span>Gradle sync finished in 2 s 141 ms (from cached state) (a minute ago)</span>
    <div class="status-right">
      <span>CRLF</span>
      <span class="off">UTF-8</span>
      <span>4 spaces</span>
      <svg class="ic s14 grey"><use href="#i-lock"/></svg>
      <svg class="ic s14 grey hector"><use href="#i-hector"/></svg>
    </div>
  </div>

  <!-- Windows taskbar -->
  <div class="taskbar">
    <div class="start"><svg class="ic s16"><use href="#i-win"/></svg></div>
    <div class="searchbox"><svg class="ic glass" viewBox="0 0 16 16"><circle cx="10" cy="6" r="5" fill="none" stroke="#222" stroke-width="1.300"/><path stroke="#222" stroke-width="1.500" d="M6.500 9.500L1 15"/></svg><span>Type here to search</span></div>
    <div class="task"><i class="cortana"></i></div>
    <div class="task"><svg class="ic s16"><use href="#i-taskview"/></svg></div>
    <div class="task running"><svg class="ic t22"><use href="#i-explorer"/></svg></div>
    <div class="task"><svg class="ic t22"><use href="#i-store"/></svg></div>
    <div class="task"><svg class="ic t22"><use href="#i-mail"/></svg></div>
    <div class="task"><svg class="ic t22"><use href="#i-edge"/></svg></div>
    <div class="task"><svg class="ic t22"><use href="#i-zoom"/></svg></div>
    <div class="task"><svg class="ic t22"><use href="#i-chrome"/></svg></div>
    <div class="task"><svg class="ic t22"><use href="#i-firefox"/></svg></div>
    <div class="task running current"><svg class="ic t22"><use href="#i-studio"/></svg></div>
    <div class="task"><svg class="ic t22"><use href="#i-fin"/></svg></div>
    <div class="task running"><svg class="ic t22"><use href="#i-note"/></svg></div>
    <div class="task running"><svg class="ic t22"><use href="#i-ie"/></svg></div>
    <div class="tray">
      <svg class="ic tray-caret"><use href="#i-caret"/></svg>
      <svg class="ic s14 tray-wifi"><use href="#i-wifi"/></svg>
      <svg class="ic s16 tray-cloud"><use href="#i-cloud"/></svg>
      <svg class="ic s15 tray-batt"><use href="#i-battery"/></svg>
      <svg class="ic s15 tray-mute"><use href="#i-mute"/></svg>
      <span class="lang">ENG</span>
      <div class="clock"><div>00:00</div><div>29-06-2020</div></div>
      <div class="notif"><i></i><span>11</span></div>
    </div>
  </div>
</body>
</html>
```

FILE: styles.css
```css
/* Base */
* {
  box-sizing: border-box;
}
html, body {
  margin: 0;
  height: 100%;
}
body {
  width: 1366px;
  height: 768px;
  overflow: hidden;
  display: flex;
  flex-direction: column;
  background-color: #3c3f41;
  color: #bbbbbb;
  font-family: "Open Sans", "Noto Sans", sans-serif;
  font-size: 11.5px;
}
.sprite {
  position: absolute;
  width: 0;
  height: 0;
}
.ic {
  display: block;
  flex: none;
  overflow: visible;
}
i, em {
  font-style: normal;
}
small {
  font-size: inherit;
}
.s10 { width: 10px; height: 10px; }
.s12 { width: 12px; height: 12px; }
.s14 { width: 14px; height: 14px; }
.s15 { width: 15px; height: 15px; }
.s16 { width: 16px; height: 16px; }
.t22 { width: 22px; height: 22px; }
.tiny { width: 8px; height: 8px; }
.droid { width: 14px; height: 11px; color: #3ddc84; }
.arrow { width: 9px; height: 9px; color: #afb1b3; }
.grey { color: #afb1b3; }
.light { color: #d5d7d9; }
.dim { color: #5f6365; }
.slate { color: #9aa7b0; }
.teal { color: #3d88a5; }
.grey-blue { color: #9aa7b0; }
.green-dark { color: #499c54; }
.ab {
  color: #9aa7b0;
  font-weight: 600;
  width: 14px;
  flex: none;
  font-size: 11px;
}

/* Menu bar */
.menubar {
  height: 29px;
  flex: none;
  display: flex;
  align-items: center;
  border-bottom: 1px solid #515151;
}
.logo {
  width: 16px;
  height: 13px;
  margin-left: 7px;
  color: #3ddc84;
}
.menu {
  display: flex;
  gap: 12.3px;
  margin-left: 12px;
}
.win-title {
  margin-left: 12px;
  color: #8f9193;
  white-space: nowrap;
  flex: 1;
  min-width: 0;
}
.win-controls {
  display: flex;
  align-items: center;
  width: 143px;
  height: 28px;
  flex: none;
}
.win-min {
  width: 10px;
  height: 1px;
  background: #bbb;
  margin-left: 21px;
}
.win-max {
  width: 10px;
  height: 10px;
  border: 1px solid #bbb;
  margin-left: 37px;
}
.win-close {
  width: 12px;
  height: 12px;
  margin-left: 37px;
  background:
    linear-gradient(45deg, transparent 47%, #bbb 47%, #bbb 53%, transparent 53%),
    linear-gradient(-45deg, transparent 47%, #bbb 47%, #bbb 53%, transparent 53%);
}

/* Breadcrumbs and run toolbar */
.navbar {
  height: 29px;
  flex: none;
  display: flex;
  align-items: center;
  border-bottom: 1px solid #2f3133;
  padding-left: 10px;
}
.crumbs {
  display: flex;
  align-items: center;
  white-space: nowrap;
}
.crumbs .ic {
  margin-right: 4px;
}
.crumbs .ic:first-child {
  margin-right: 2px;
}
.crumb-sep {
  display: block;
  width: 6px;
  height: 16px;
  flex: none;
  color: #5f6365;
  margin: 0 3.5px;
}
.typo {
  text-decoration: underline wavy #c75450 1px;
  text-underline-offset: 2px;
}
.run-tools {
  position: absolute;
  left: 748px;
  top: 29px;
  height: 28px;
  display: flex;
  align-items: center;
  font-size: 12px;
}
.tb-btn {
  width: 26px;
  height: 26px;
  display: flex;
  align-items: center;
  justify-content: center;
  flex: none;
}
.play-btn {
  margin-left: 4px;
}
.tb-sep {
  width: 1px;
  height: 20px;
  background: #515151;
  margin: 0 3px;
  flex: none;
}
.stop {
  width: 11px;
  height: 11px;
  background: #5f6365;
}
.combo {
  height: 21px;
  border: 1px solid #5e6060;
  border-radius: 3px;
  display: flex;
  align-items: center;
  padding-left: 7px;
  flex: none;
  margin-left: 8px;
  position: relative;
}
.combo-app {
  width: 71px;
  gap: 5px;
}
.combo-dev {
  width: 90px;
  margin-left: 7px;
}
.combo-arrow {
  width: 8px;
  height: 8px;
  color: #afb1b3;
  position: absolute;
  right: 7px;
  top: 6px;
}

/* Workbench */
.workbench {
  flex: 1;
  min-height: 0;
  display: flex;
}
.stripe {
  flex: none;
  display: flex;
  flex-direction: column;
  font-size: 10.8px;
  white-space: nowrap;
}
.stripe-left {
  width: 22px;
  border-right: 1px solid #323232;
}
.stripe-right {
  width: 20px;
  border-left: 1px solid #323232;
  align-items: center;
}
.stripe-item {
  display: flex;
  flex: none;
  flex-direction: column;
  align-items: center;
  gap: 5px;
}
.v-text {
  writing-mode: vertical-rl;
}
.stripe-left .v-text {
  transform: rotate(180deg);
}
.stripe-left .stripe-item {
  width: 21px;
}
.st-project {
  height: 84px;
  padding-top: 11px;
  background-color: #2f3133;
  color: #d0d0d0;
}
.st-res { margin-top: 14px; }
.st-struct { margin-top: 126px; }
.st-build { margin-top: 23px; }
.st-fav { margin-top: 24px; }
.st-gradle { margin-top: 10px; }
.st-valid { margin-top: 21px; }
.st-dfe { margin-top: 313px; }

/* Project panel */
.project {
  width: 127px;
  flex: none;
  border-right: 1px solid #323232;
  white-space: nowrap;
  overflow: hidden;
}
.project-head {
  height: 28px;
  display: flex;
  align-items: center;
  padding-left: 9px;
}
.dots {
  margin-left: 5px;
}
.project-head .tiny {
  margin-left: 1px;
}
.target { margin-left: 11px; }
.collapse { margin-left: 12px; }
.head-sep {
  width: 1px;
  height: 20px;
  background: #515151;
  margin-left: 9px;
  flex: none;
}
.cog { margin-left: 7px; }
.p-row {
  height: 20px;
  display: flex;
  align-items: center;
}
.p-row.selected {
  background-color: #0d293e;
  color: #d5d7d9;
}
.p-row .arrow {
  margin-right: 8px;
}
.p-row span, .p-row b {
  margin-left: 4px;
}
.p0 { padding-left: 3px; }
.p1 { padding-left: 21px; }
.p1 .arrow { margin-right: 9px; }

/* Editor */
.editor {
  flex: 1;
  min-width: 0;
  display: flex;
  flex-direction: column;
}
.tabs {
  height: 27px;
  flex: none;
  display: flex;
  border-bottom: 1px solid #323232;
}
.tab {
  display: flex;
  align-items: center;
  gap: 4px;
  padding-left: 9px;
  white-space: nowrap;
}
.tab:first-child {
  width: 144px;
}
.tab + .tab {
  width: 137px;
}
.tab.active {
  background-color: #4b4f51;
  border-bottom: 3px solid #4a88c7;
  height: 27px;
}
.tab em {
  color: #6e7072;
  font-size: 14px;
  margin-left: 4px;
}
.class-badge {
  width: 13px;
  height: 13px;
  border-radius: 50%;
  background-color: #3d88a5;
  color: #2b2d30;
  font-size: 9px;
  font-weight: 700;
  display: flex;
  align-items: center;
  justify-content: center;
  margin-right: 1px;
}
.view-switch {
  height: 29px;
  flex: none;
  display: flex;
  justify-content: flex-end;
  align-items: center;
  padding-right: 5px;
  gap: 4px;
  border-bottom: 1px solid #323232;
}
.view-btn {
  height: 22px;
  display: flex;
  align-items: center;
  gap: 3px;
  padding: 0 3px 0 4px;
}
.view-btn.on {
  background-color: #4e5254;
  border-radius: 3px;
}
.workspace {
  height: 546px;
  flex: none;
  display: flex;
}
.editor-foot {
  flex: 1;
  background-color: #323436;
  border-top: 1px solid #3c3f41;
}

/* Shared panel header */
.panel-head {
  height: 29px;
  flex: none;
  display: flex;
  align-items: center;
  justify-content: space-between;
  padding: 0 6px;
  font-size: 11px;
}
.head-icons {
  display: flex;
  align-items: center;
  gap: 12px;
  padding-right: 3px;
}

/* Palette */
.left-col {
  width: 225px;
  flex: none;
  display: flex;
  flex-direction: column;
  background-color: #313335;
  white-space: nowrap;
}
.left-col > .panel-head {
  background-color: #3c3f41;
}
.palette {
  height: 241px;
  flex: none;
  display: flex;
  border-top: 1px solid #323232;
}
.cats {
  width: 79px;
  flex: none;
}
.cat {
  height: 24px;
  line-height: 24px;
  padding-left: 11px;
  margin-right: 1px;
}
.cat.selected {
  background-color: #0d293e;
  color: #d5d7d9;
}
.widgets {
  flex: 1;
}
.widget {
  height: 20px;
  display: flex;
  align-items: center;
  gap: 4px;
  padding-left: 11px;
  margin-right: 1px;
}
.widget.selected {
  background-color: #0d293e;
  color: #d5d7d9;
}
.dl {
  color: #6e7072;
  margin-left: auto;
  margin-right: 5px;
}
.panel-gap {
  height: 8px;
  flex: none;
  background-color: #3c3f41;
  border-bottom: 1px solid #313335;
}
.panel-head.tree-head {
  height: 28px;
}
.tree {
  flex: 1;
  min-height: 0;
  overflow: hidden;
  position: relative;
  border-top: 1px solid #323232;
}
.tree-scroll {
  position: absolute;
  right: 2px;
  top: 1px;
  width: 8px;
  height: 190px;
  background-color: #4b4e50;
}
.t-row {
  height: 20px;
  display: flex;
  align-items: center;
}
.t-row > span:not(.ab) {
  margin-left: 5px;
}
.t-row small {
  color: #757779;
  margin-left: 8px;
  font-size: 10.5px;
}
.t-row .arrow {
  margin-right: 7px;
}
.lv0 { padding-left: 7px; }
.lv1 { padding-left: 9px; }
.lv2 { padding-left: 27px; }
.leaf { padding-left: 61px; }

/* Design surface */
.design {
  flex: 1;
  min-width: 0;
  display: flex;
  flex-direction: column;
  border-left: 1px solid #323232;
  border-right: 1px solid #323232;
}
.design-bar {
  height: 29px;
  flex: none;
  display: flex;
  align-items: center;
  padding-left: 6px;
  border-bottom: 1px solid #323232;
  white-space: nowrap;
}
.bar-two {
  height: 28px;
}
.bar-sep {
  width: 1px;
  height: 20px;
  background-color: #515151;
  flex: none;
}
.mr-layers { margin-right: 7px; }
.mr-rotate { margin: 0 8px; }
.mr-device { margin: 0 4px 0 12px; }
.mr-api { margin: 0 3px 0 12px; }
.mr-theme { margin: 0 3px 0 14px; }
.mr-locale { margin-left: 8px; }
.mr-globe { margin: 0 3px 0 12px; }
.mr-cols { margin: 0 8px 0 3px; }
.mr-arrow { margin-left: 11px; }
.mr-arrow2 { margin-left: 12px; }
.chev {
  width: 9px;
  height: 9px;
  color: #7f8183;
  margin-left: 3px;
}
.bar-end {
  margin-left: auto;
  margin-right: 8px;
}
.canvas {
  flex: 1;
  min-height: 0;
  position: relative;
  background-color: #2d2f31;
  padding: 58px 0 0 239px;
}
.phone {
  width: 209px;
  height: 375px;
  display: flex;
  flex-direction: column;
  background-color: #fbfbfb;
  box-shadow: 1px 1px 5px rgba(0,0,0,0.6);
  font-family: Roboto, sans-serif;
}
.ph-header {
  height: 70px;
  flex: none;
  display: flex;
  background-color: #999c9f;
  border-bottom: 1px solid #aeb0b2;
  color: #55585c;
  font-size: 15px;
  padding-top: 2px;
}
.ph-header div, .ph-scores div {
  flex: 1;
  display: flex;
  align-items: center;
  justify-content: center;
}
.ph-scores {
  height: 117px;
  flex: none;
  display: flex;
  color: #757575;
  font-size: 54px;
  padding-top: 3px;
}
.ph-buttons {
  height: 147px;
  flex: none;
  display: flex;
}
.ph-col {
  flex: 1;
  margin: 0 14px;
  background-color: #00bcd9;
  display: flex;
  flex-direction: column;
  color: #0b2025;
  font-size: 10.2px;
  font-weight: 500;
  padding-top: 1px;
}
.ph-col div {
  flex: 1;
  display: flex;
  align-items: center;
  justify-content: center;
}
.ph-reset {
  width: 92px;
  height: 41px;
  margin-left: 58px;
  background-color: #06f708;
  color: #0a1a0a;
  display: flex;
  align-items: center;
  justify-content: center;
  font-size: 20px;
  font-weight: 500;
  padding-top: 2px;
}
.grip {
  position: absolute;
  left: 453px;
  top: 437px;
  width: 18px;
  height: 18px;
}
.zoom-box {
  position: absolute;
  left: 648px;
  width: 28px;
  background-color: #3c3f41;
  border-radius: 3px;
  display: flex;
  flex-direction: column;
  align-items: center;
}
.hand-box {
  top: 330px;
  height: 30px;
  justify-content: center;
}
.zoom-stack {
  top: 364px;
  height: 108px;
  padding-top: 9px;
  gap: 13px;
  font-size: 10px;
  font-weight: 600;
  color: #d5d7d9;
}

/* Attributes */
.attrs {
  width: 280px;
  flex: none;
  display: flex;
  flex-direction: column;
  background-color: #313335;
  white-space: nowrap;
}
.attrs .panel-head {
  background-color: #3c3f41;
  padding-right: 6px;
}
.unnamed {
  height: 24px;
  flex: none;
  display: flex;
  align-items: center;
  padding: 0 7px 0 7px;
  border-top: 1px solid #323232;
}
.unnamed span {
  margin-left: 6px;
}
.unnamed small {
  margin-left: auto;
  color: #757779;
  font-size: 11px;
}
.a-row {
  height: 24px;
  flex: none;
  display: flex;
  align-items: center;
  padding-left: 8px;
  position: relative;
}
.a-row label {
  width: 106px;
  flex: none;
  display: flex;
  align-items: center;
  gap: 2px;
}
.a-row.first {
  margin-top: 6px;
}
.id-row {
  margin-top: 4px;
}
.field {
  width: 148px;
  height: 18px;
  border: 1px solid #646464;
  background-color: #2f3133;
  display: flex;
  align-items: center;
  padding-left: 5px;
  position: relative;
  flex: none;
}
.combo-field {
  border-radius: 2px;
}
.flag-field {
  padding-left: 3px;
}
.f-drop {
  position: absolute;
  right: 0;
  top: 0;
  width: 22px;
  height: 16px;
  border-left: 1px solid #646464;
  display: flex;
  align-items: center;
  justify-content: center;
}
.pill {
  width: 6px;
  height: 16px;
  border: 1px solid #646464;
  border-radius: 3px;
  flex: none;
  margin-left: 5px;
}
.a-section {
  height: 24px;
  flex: none;
  display: flex;
  align-items: center;
  background-color: #3c3f41;
  padding-left: 7px;
  width: 279px;
}
.a-section b {
  margin-left: 3px;
  font-weight: 600;
}
.sec-declared { margin-top: 3px; }
.sec-layout { margin-top: 5px; }
.sec-common { margin-top: 3px; }
.sec-all { margin-top: 3px; }
.sec-icons {
  margin-left: auto;
  display: flex;
  gap: 14px;
  padding-right: 8px;
}
.d-row {
  height: 24px;
  flex: none;
  display: flex;
  align-items: center;
  width: 279px;
  position: relative;
  border-bottom: 1px solid #3a3c3e;
  padding: 2px 0 0 13px;
}
.d-row label {
  width: 99px;
  flex: none;
  height: 23px;
  margin-top: -2px;
  padding-top: 2px;
  line-height: 21px;
  border-right: 1px solid #3a3c3e;
}
.d-arrow {
  position: absolute;
  left: 3px;
  top: 8px;
  width: 8px;
  height: 9px;
  color: #afb1b3;
}
.d-val {
  width: 149px;
  padding-left: 10px;
  display: flex;
  align-items: center;
  position: relative;
  height: 18px;
  flex: none;
}
.d-val.flagged {
  gap: 7px;
  padding-left: 8px;
}
.d-val.flagged span {
  font-size: 11px;
}
.d-val.no-pad {
  padding-left: 6px;
}
.d-drop {
  position: absolute;
  right: 0;
  top: 1px;
  width: 22px;
  height: 16px;
  background-color: #3c3f41;
  border-left: 1px solid #555;
  display: flex;
  align-items: center;
  justify-content: center;
}
.d-row .pill {
  margin-left: 6px;
}
.tool-row {
  padding-left: 5px;
}
.tool-row label {
  width: 97px;
  margin-left: 3px;
}

/* Tool window bar */
.toolbar-bottom {
  height: 22px;
  flex: none;
  position: relative;
  display: flex;
  align-items: center;
  border-top: 1px solid #323232;
  border-bottom: 1px solid #323232;
  padding-top: 2px;
  font-size: 11px;
}
.tw {
  display: flex;
  align-items: center;
  gap: 5px;
  white-space: nowrap;
}
.tw-todo { margin-left: 33px; }
.tw-build { margin-left: 18px; }
.tw-logcat { margin-left: 21px; }
.tw-term { margin-left: 21px; }
.tw-event { margin-left: auto; }
.tw-inspect { margin-left: 23px; margin-right: 32px; }

/* Status bar */
.statusbar {
  height: 21px;
  flex: none;
  display: flex;
  align-items: center;
  padding-left: 6px;
  white-space: nowrap;
}
.st-icon {
  margin-right: 9px;
  color: #afb1b3;
}
.status-right {
  margin-left: auto;
  display: flex;
  align-items: center;
  gap: 10.5px;
  font-size: 11.5px;
}
.off {
  color: #787878;
}
.hector { margin: 0 9px 0 2px; }

/* Taskbar */
.taskbar {
  height: 41px;
  flex: none;
  display: flex;
  background-color: #151515;
  border-top: 1px solid #000;
}
.start {
  width: 48px;
  flex: none;
  display: flex;
  align-items: center;
  justify-content: center;
}
.searchbox {
  width: 344px;
  flex: none;
  display: flex;
  align-items: center;
  background-color: #f0f0f0;
  border: 1px solid #a8a8a8;
  border-top: none;
  color: #222;
  font-size: 14px;
  padding-left: 11px;
}
.glass {
  width: 16px;
  height: 16px;
  margin-right: 12px;
}
.task {
  width: 49.2px;
  flex: none;
  display: flex;
  align-items: center;
  justify-content: center;
  position: relative;
}
.task.running::after {
  content: "";
  position: absolute;
  left: 4px;
  right: 4px;
  bottom: 0;
  height: 2px;
  background-color: #76b9ed;
}
.task.current {
  background-color: #3a3a3a;
}
.task.current::after {
  left: 0;
  right: 0;
}
.cortana {
  width: 15px;
  height: 15px;
  border: 2.5px solid #fff;
  border-radius: 50%;
}
.tray {
  flex: 1;
  min-width: 0;
  display: flex;
  align-items: center;
  color: #fff;
  font-size: 12px;
  padding-left: 61px;
}
.tray-caret {
  width: 14px;
  height: 10px;
}
.tray-wifi { margin-left: 11px; }
.tray-cloud { margin-left: 7px; }
.tray-batt { margin-left: 6px; }
.tray-mute { margin-left: 7px; }
.lang {
  margin-left: 14px;
  width: 24px;
  flex: none;
}
.clock {
  text-align: center;
  line-height: 21px;
  margin-left: 8px;
  width: 66px;
  flex: none;
  font-size: 11.5px;
  white-space: nowrap;
}
.notif {
  position: relative;
  width: 22px;
  height: 22px;
  margin-left: 17px;
  flex: none;
}
.notif i {
  position: absolute;
  left: 0;
  top: 0;
  width: 15px;
  height: 14px;
  background-color: #fff;
}
.notif span {
  position: absolute;
  left: 6px;
  top: 8px;
  width: 16px;
  height: 16px;
  line-height: 14px;
  border: 1px solid #aaa;
  border-radius: 50%;
  background-color: #333;
  text-align: center;
  font-size: 10px;
}
```
